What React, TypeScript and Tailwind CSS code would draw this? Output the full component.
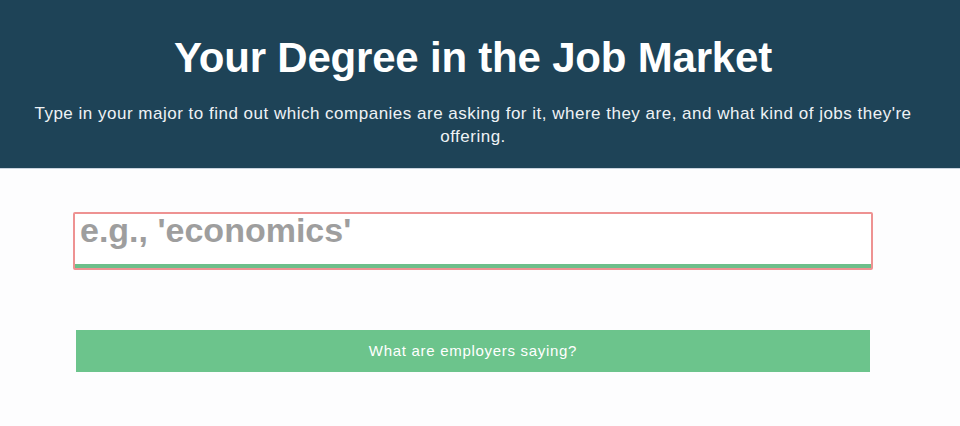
import { useState } from 'react';

export default function App() {
  const [major, setMajor] = useState('');

  return (
    <div className="min-h-screen bg-[#fdfdfe]" style={{ fontFamily: '"Liberation Sans", Arial, sans-serif' }}>
      {/* Header */}
      <header className="bg-[#1e4357] border-b border-[#c9d3de] pl-[30px] pr-[44px] pt-[34px] pb-[20px] text-center text-white">
        <h1 className="text-[42px] leading-[48px] font-bold tracking-[-0.2px]">Your Degree in the Job Market</h1>
        <p className="mt-[20px] text-[17px] leading-[23px] tracking-[0.5px] text-[#eef2f5]">
          Type in your major to find out which companies are asking for it, where they are, and what kind of jobs they're offering.
        </p>
      </header>

      {/* Search */}
      <div className="ml-[73px] w-[800px] mt-[43px]">
        <div className="border-2 border-[#ee9292] rounded-[2px]">
          <input
            type="text"
            value={major}
            onChange={(e) => setMajor(e.target.value)}
            placeholder="e.g., 'economics'"
            className="block w-full h-[54px] px-[5px] pt-0 pb-[17px] bg-white border-b-4 border-[#6dbf8a] text-[34px] font-bold text-gray-700 placeholder:text-[#9e9e9e] outline-none"
          />
        </div>

        <button className="block mt-[60px] mx-[3px] w-[794px] h-[42px] bg-[#6cc48c] text-white text-[15px] tracking-[0.7px]">
          What are employers saying?
        </button>
      </div>
    </div>
  );
}
